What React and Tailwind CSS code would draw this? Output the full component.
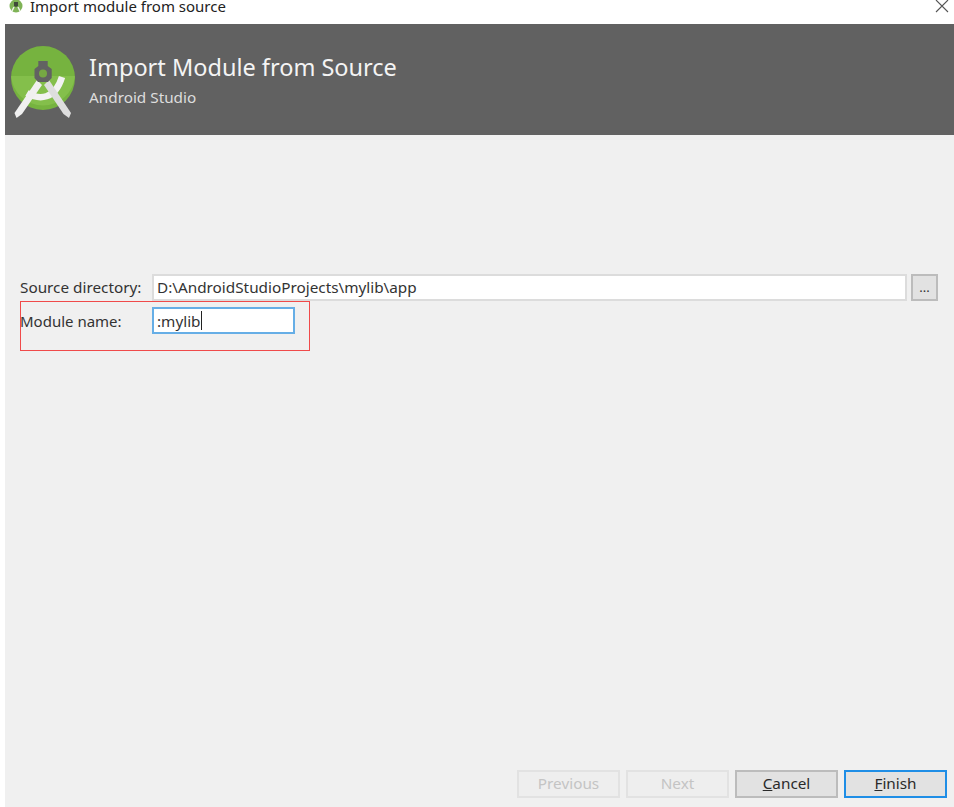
import React from "react";

function Logo() {
  return (
    <svg width="66" height="74" viewBox="0 0 66 74" className="shrink-0">
      <circle cx="32" cy="32" r="32" fill="#76b33f" />
      <path d="M0.1 30 A32 32 0 0 0 63.9 30 Z" fill="#84bf4b" />
      <path d="M16 47 C28 54 44 54 51 31" fill="none" stroke="#f2f2f2" strokeWidth="6.5" />
      <path d="M26 34 L3.5 67 L5.5 72 L11 68 L31 39 Z" fill="#f0f0f0" />
      <path d="M38 34 L60 67 L58 72 L52.5 68 L33 39 Z" fill="#dedede" />
      <path d="M27.3 15 L27.3 20 L23.5 23 L23.5 32 L27 36 L37 36 L40.7 32 L40.7 23 L36.7 20 L36.7 15 Z" fill="#626262" />
      <circle cx="32" cy="27.5" r="4" fill="#76a843" />
    </svg>
  );
}

function Btn({ children, variant }) {
  const base = "h-[28px] w-[103px] flex items-center justify-center text-[15.3px] leading-none border-2 ";
  const styles = {
    disabled: "bg-[#eeeeee] border-[#e2e2e2] text-[#c4c4c4]",
    normal: "bg-[#e2e2e2] border-[#bcbcbc] text-[#2a2a2a]",
    focus: "bg-[#e2e2e2] border-[#1f8ee6] text-[#2a2a2a]",
  };
  return <button className={base + styles[variant]}>{children}</button>;
}

export default function App() {
  return (
    <div className="w-[954px] h-[807px] bg-white flex flex-col overflow-hidden text-[#333333] font-['Noto_Sans','Liberation_Sans',sans-serif]">
      <div className="h-[24px] shrink-0 flex items-center justify-between pl-[9px] pr-[5px]">
        <div className="flex items-center gap-[7px] -mt-[12px]">
          <svg width="14" height="14" viewBox="0 0 14 14">
            <circle cx="7" cy="7" r="6.5" fill="#7fb356" />
            <path d="M5 3 H9 V7 L7 8 L5 7 Z" fill="#3f4a3a" />
            <path d="M5 8 L3 12 M9 8 L11 12" stroke="#eef2ea" strokeWidth="1.5" />
          </svg>
          <span className="text-[15px] leading-[20px] text-[#222222]">Import module from source</span>
        </div>
        <svg width="14" height="14" viewBox="0 0 14 14" className="-mt-[12px]">
          <path d="M1 1 L13 13 M13 1 L1 13" stroke="#555555" strokeWidth="1.1" />
        </svg>
      </div>
      <div className="flex-1 min-h-0 ml-[5px] bg-[#f0f0f0] flex flex-col">
        <div className="h-[111px] shrink-0 bg-[#616161] flex items-center pl-[6px] gap-[12px]">
          <div className="mt-[6px]"><Logo /></div>
          <div className="flex flex-col -mt-[2px]">
            <span className="text-[23.5px] leading-[32px] text-[#f4f4f4]">Import Module from Source</span>
            <span className="text-[15.3px] leading-[20px] mt-[4px] text-[#dddddd]">Android Studio</span>
          </div>
        </div>
        <div className="flex-1 min-h-0 flex flex-col pl-[15px] pr-[16px]">
          <div className="mt-[139px] flex items-center h-[27px]">
            <span className="w-[133px] text-[15.3px]">Source directory:</span>
            <div className="flex-1 h-[27px] bg-white border-2 border-[#dcdcdc] flex items-center pl-[3px] text-[15.3px] -ml-px">D:\AndroidStudioProjects\mylib\app</div>
            <div className="ml-[4px] w-[27px] h-[27px] bg-[#e2e2e2] border-2 border-[#bcbcbc] flex items-center justify-center text-[13px] leading-none pb-[1px]">...</div>
          </div>
          <div className="relative mt-[6px] flex items-center h-[27px]">
            <span className="w-[132px] text-[15px] translate-y-px">Module name:</span>
            <div className="w-[143px] h-[27px] bg-white border-2 border-[#66aee6] flex items-center pl-[3px] text-[15.3px]">
              <span className="translate-y-px">:mylib</span><span className="w-px h-[19px] bg-[#222222]" />
            </div>
            <div className="absolute left-0 -top-[6px] w-[290px] h-[50px] border border-[#f04a4a]" />
          </div>
          <div className="mt-auto mb-[9px] -mr-[9px] flex justify-end gap-[6px]">
            <Btn variant="disabled">Previous</Btn>
            <Btn variant="disabled">Next</Btn>
            <Btn variant="normal"><span><span className="underline">C</span>ancel</span></Btn>
            <Btn variant="focus"><span><span className="underline">F</span>inish</span></Btn>
          </div>
        </div>
      </div>
    </div>
  );
}
